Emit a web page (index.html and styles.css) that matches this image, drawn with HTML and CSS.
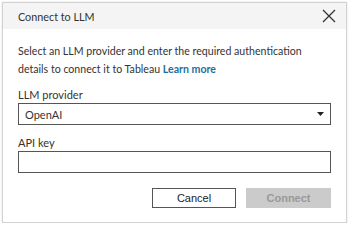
FILE: index.html
```html
<!DOCTYPE html>
<html lang="en-us">
<head>
    <meta charset="UTF-8">
    <meta name="viewport" content="width=device-width, initial-scale=1.0">
    <title>Connect to LLM</title>
    <link rel="stylesheet" href="styles.css">
</head>
<body>
    <div class="dialog">
        <div class="dialog-header">
            <span class="dialog-title">Connect to LLM</span>
            <svg class="close-icon" width="14" height="14" viewBox="0 0 14 14">
                <path d="M1 1 L13 13 M13 1 L1 13" stroke="#333" stroke-width="1.3" fill="none"/>
            </svg>
        </div>
        <div class="dialog-body">
            <p class="intro">
                <span>Select an LLM provider and enter the required authentication</span><br>
                <span>details to connect it to Tableau</span> <a href="#" class="learn-more">Learn more</a>
            </p>

            <div class="field-label">LLM provider</div>
            <div class="select-box">
                <span>OpenAI</span>
                <svg class="select-arrow" width="7" height="4" viewBox="0 0 7 4">
                    <path d="M0 0 L7 0 L3.5 4 Z" fill="#222"/>
                </svg>
            </div>

            <div class="field-label second">API key</div>
            <div class="text-input"></div>

            <div class="buttons">
                <button class="btn btn-cancel">Cancel</button>
                <button class="btn btn-connect" disabled>Connect</button>
            </div>
        </div>
    </div>
</body>
</html>
```

FILE: styles.css
```css
body {
    margin: 0;
    background: #fff;
    font-family: Lato, "Noto Sans", sans-serif;
    color: #333;
}

.dialog {
    margin: 2px 0 0 2px;
    width: 343px;
    height: 219px;
    border: 1px solid #d2d2d2;
    box-shadow: 0 0 2px rgba(0, 0, 0, 0.12);
    background: #fff;
}

.dialog-header {
    height: 26px;
    background: #f4f4f4;
    display: flex;
    align-items: center;
    justify-content: space-between;
    padding: 0 10px 0 15px;
}

.dialog-title {
    font-size: 10.8px;
    color: #333;
}

.close-icon {
    display: block;
}

.dialog-body {
    padding: 13px 15px 0 15px;
}

.intro {
    margin: 0;
    font-size: 10.6px;
    line-height: 18px;
    white-space: nowrap;
}

.learn-more {
    color: #1f6e9c;
    font-weight: bold;
    text-decoration: none;
}

.field-label {
    margin-top: 9px;
    font-size: 11px;
    line-height: 16px;
}

.field-label.second {
    margin-top: 10px;
}

.select-box {
    height: 20px;
    border: 1px solid #555;
    display: flex;
    align-items: center;
    justify-content: space-between;
    padding: 0 6px 0 6px;
    font-size: 11px;
}

.select-arrow {
    display: block;
}

.text-input {
    height: 20px;
    border: 1px solid #555;
}

.buttons {
    margin-top: 15px;
    display: flex;
    justify-content: flex-end;
    gap: 10px;
}

.btn {
    font-family: "Liberation Sans", Arial, sans-serif;
    font-size: 11px;
    height: 20px;
    padding: 0;
    margin: 0;
}

.btn-cancel {
    width: 84px;
    background: #fff;
    border: 1px solid #555;
    color: #222;
}

.btn-connect {
    width: 85px;
    background: #cbcbcb;
    border: 1px solid #cbcbcb;
    color: #999;
    font-weight: bold;
}
```
